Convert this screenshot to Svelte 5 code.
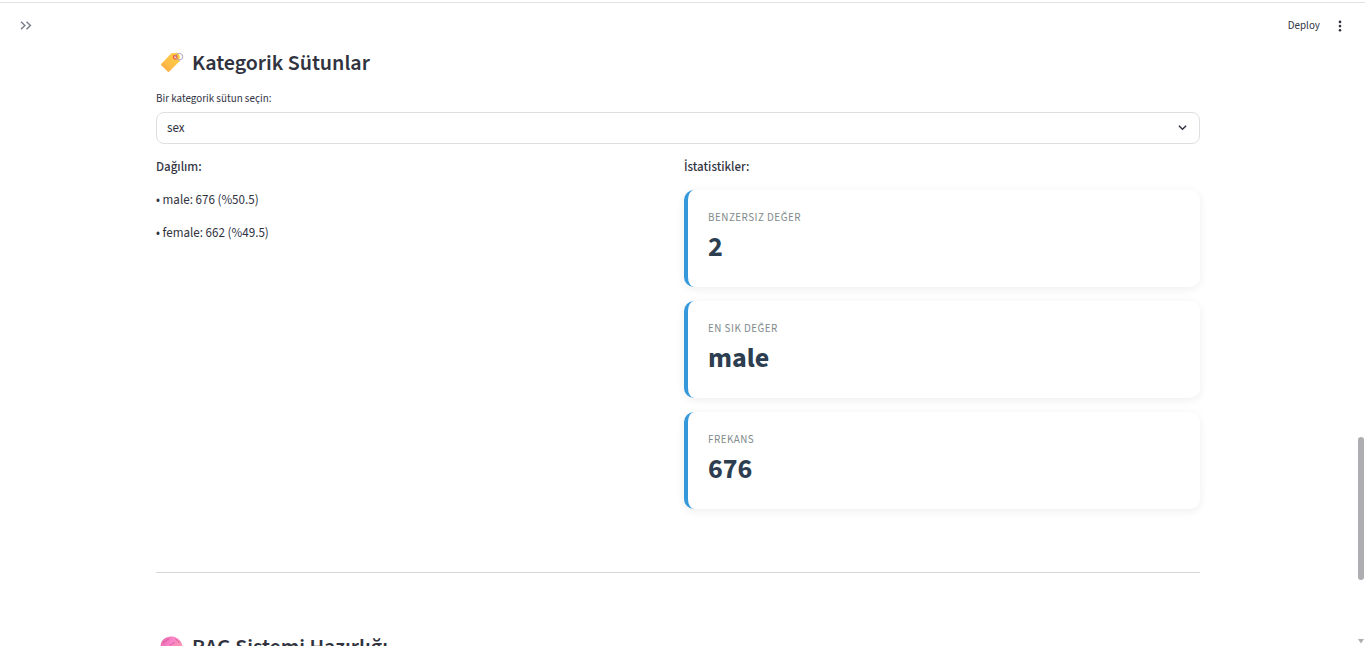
<script>
  let column = $state('sex');

  const distribution = [
    { name: 'male', count: 676, share: '50.5' },
    { name: 'female', count: 662, share: '49.5' }
  ];

  const stats = [
    { label: 'BENZERSIZ DEĞER', value: '2' },
    { label: 'EN SIK DEĞER', value: 'male' },
    { label: 'FREKANS', value: '676' }
  ];
</script>

<div class="app">
  <header>
    <button class="icon-button" aria-label="Kenar çubuğunu aç">
      <svg width="16" height="16" viewBox="0 0 16 16" fill="none" stroke="#7d808d" stroke-width="1.5">
        <path d="M3 3.700 6.900 7.500 3 11.300M8.500 3.700 12.400 7.500 8.500 11.300" />
      </svg>
    </button>
    <div class="actions">
      <button class="deploy">Deploy</button>
      <button class="icon-button" aria-label="Menü">
        <svg width="16" height="16" viewBox="0 0 16 16" fill="#31333f">
          <circle cx="8" cy="3.900" r="1.300" />
          <circle cx="8" cy="8.100" r="1.300" />
          <circle cx="8" cy="12.300" r="1.300" />
        </svg>
      </button>
    </div>
  </header>

  <main>
    <h3>
      <svg class="emoji" width="24" height="24" viewBox="0 0 24 24" aria-hidden="true">
        <defs>
          <linearGradient id="tag" x1="1" y1="0" x2="0" y2="1">
            <stop offset="0" stop-color="#ffd23e" />
            <stop offset="0.6" stop-color="#ffbd49" />
            <stop offset="1" stop-color="#f9a33f" />
          </linearGradient>
        </defs>
        <path d="M11.400 2.300 16.800 1.800Q19.300 2.400 19.700 4.900L19.500 10.200 9.400 20.600Q8.500 21.300 7.600 20.500L1.300 14.200Q.700 13.500 1.400 12.700Z" fill="url(#tag)" />
        <circle cx="15.200" cy="6.300" r="1.800" fill="#ffe5c4" stroke="#ee5b4a" stroke-width="1.300" />
        <path d="M15.400 6.300C15.600 1.200 22.600 1.100 22.700 5.600 22.700 9.500 18 10.100 16.300 7" fill="none" stroke="#a99bb8" stroke-width="1" />
      </svg>
      <span>Kategorik Sütunlar</span>
    </h3>

    <label class="field-label" for="column">Bir kategorik sütun seçin:</label>
    <div class="select">
      <select id="column" bind:value={column}>
        <option value="sex">sex</option>
      </select>
      <svg width="16" height="16" viewBox="0 0 16 16" fill="none" stroke="#31333f" stroke-width="1.500" aria-hidden="true">
        <path d="M3.900 5.700 7.500 9.200 11.100 5.700" />
      </svg>
    </div>

    <div class="columns">
      <section class="distribution">
        <p><strong>Dağılım:</strong></p>
        {#each distribution as row}
          <p>• {row.name}: {row.count} (%{row.share})</p>
        {/each}
      </section>
      <section>
        <p><strong>İstatistikler:</strong></p>
        <div class="cards">
          {#each stats as stat}
            <article>
              <div class="stat-label">{stat.label}</div>
              <div class="stat-value">{stat.value}</div>
            </article>
          {/each}
        </div>
      </section>
    </div>

    <hr />

    <h3>
      <svg class="emoji" width="24" height="24" viewBox="0 0 24 24" aria-hidden="true">
        <defs>
          <linearGradient id="brain" x1="0" y1="0" x2="1" y2="0.5">
            <stop offset="0" stop-color="#e065a4" />
            <stop offset="0.5" stop-color="#f985c8" />
            <stop offset="1" stop-color="#f99ab0" />
          </linearGradient>
        </defs>
        <path d="M.500 12C.500 6 4 2.500 8.500 1.900 11 1.300 14 1.500 16.600 2.900 20.200 4.400 23 8.600 22.400 13c-.2 4-3 6-6.500 6.200L13.500 22c-2 0-3-1.500-3.400-3C4.500 20 .500 17 .500 12Z" fill="url(#brain)" />
        <path d="M3 7.500C5.500 7.200 6 4.600 9 4.200M15.500 3.600C16 5.800 18.500 5.400 19.500 8M10 10C12.500 10 12 7.400 15 7.600" fill="none" stroke="#d65299" stroke-width="0.800" />
      </svg>
      <span>RAG Sistemi Hazırlığı</span>
    </h3>
  </main>

  <div class="scrollbar" aria-hidden="true">
    <div class="thumb"></div>
    <svg width="6" height="5" viewBox="0 0 6 5"><path d="M0 0H6L3 4.500Z" fill="#adadb2" /></svg>
  </div>
</div>

<style>
  :global(body) {
    margin: 0;
    background: #fff;
  }

  .app {
    position: relative;
    box-sizing: border-box;
    height: 100vh;
    overflow: hidden;
    padding: 2px 9px 0 0;
    color: #31333f;
    font: 13px/20px 'Source Sans 3', 'Source Sans Pro', 'Noto Sans CJK SC', 'Noto Sans', sans-serif;
  }

  .app::before {
    content: '';
    position: absolute;
    inset: 2px 0 auto;
    height: 1px;
    background: #e2e2e2;
  }

  button {
    padding: 0;
    border: 0;
    background: none;
    color: inherit;
    font: inherit;
    cursor: pointer;
  }

  svg {
    display: block;
  }

  header {
    display: flex;
    align-items: center;
    justify-content: space-between;
    height: 47px;
    padding: 0 8px 0 18px;
  }

  .actions {
    display: flex;
    align-items: center;
    gap: 12px;
  }

  .deploy {
    font-size: 11px;
  }

  main {
    max-width: 1044px;
    margin: 0 auto;
  }

  h3 {
    display: flex;
    align-items: center;
    gap: 8px;
    margin: 0;
    padding-left: 4px;
    font-size: 22px;
    line-height: 28px;
    font-weight: 600;
  }

  .field-label {
    display: block;
    margin-top: 13px;
    font-size: 11px;
    line-height: 18px;
  }

  .select {
    display: grid;
    align-items: center;
    margin-top: 4px;
  }

  .select > * {
    grid-area: 1 / 1;
  }

  .select svg {
    justify-self: end;
    margin-right: 9px;
    pointer-events: none;
  }

  select {
    appearance: none;
    width: 100%;
    height: 32px;
    padding: 0 10px;
    border: 1px solid #dedfe1;
    border-radius: 8px;
    background: #fff;
    color: inherit;
    font: inherit;
  }

  .columns {
    display: grid;
    grid-template-columns: 1fr 1fr;
    gap: 12px;
    margin-top: 13px;
  }

  p {
    margin: 0 0 13px;
  }

  strong {
    font-weight: 500;
  }

  .cards {
    display: grid;
    gap: 14px;
  }

  article {
    box-sizing: border-box;
    min-height: 97px;
    padding: 19px 20px;
    border-left: 4px solid #3498db;
    border-radius: 10px;
    background: #fff;
    box-shadow: 0 2px 10px rgb(0 0 0 / 7%);
  }

  .stat-label {
    color: #7f8c8d;
    font-size: 11px;
    line-height: 18px;
    letter-spacing: 0.5px;
  }

  .stat-value {
    color: #2c3e50;
    font-size: 28px;
    line-height: 40px;
    font-weight: 700;
  }

  hr {
    height: 1px;
    margin: 63px 0 60px;
    border: 0;
    background: #d6d6d9;
  }

  .scrollbar {
    position: absolute;
    inset: 0 1px 0 auto;
    display: flex;
    flex-direction: column;
    justify-content: flex-end;
    gap: 59px;
    width: 6px;
    padding-bottom: 2px;
  }

  .thumb {
    height: 143px;
    border-radius: 3px;
    background: #adadb2;
  }
</style>
